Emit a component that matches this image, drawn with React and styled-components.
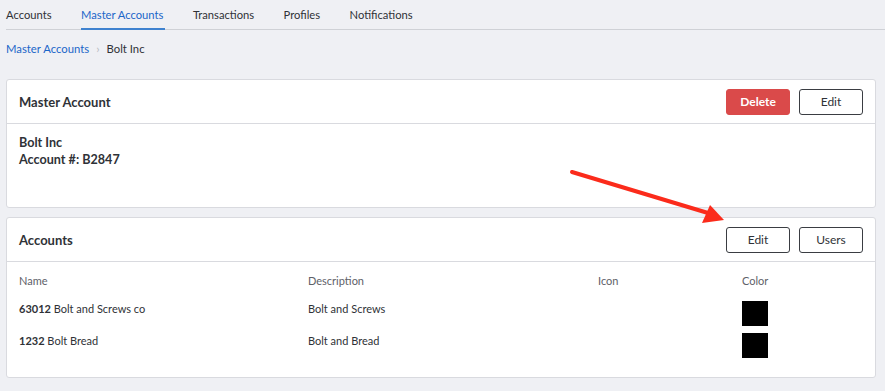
import styled, { createGlobalStyle } from 'styled-components';

const GlobalStyle = createGlobalStyle`
  html, body {
    margin: 0;
    padding: 0;
    background: #eff0f4;
    font-family: Lato, "Open Sans", sans-serif;
    color: #2f3237;
  }
`

const tabs = ['Accounts', 'Master Accounts', 'Transactions', 'Profiles', 'Notifications'];

const accounts = [
  { num: '63012', name: 'Bolt and Screws co', description: 'Bolt and Screws', color: '#000' },
  { num: '1232', name: 'Bolt Bread', description: 'Bolt and Bread', color: '#000' },
];

export default function App() {
  return (
    <>
      <GlobalStyle />
      <Page>
        <TabBar>
          {tabs.map(t => (
            <Tab key={t} $active={t === 'Master Accounts'}>{t}</Tab>
          ))}
        </TabBar>
        <Breadcrumb>
          <Crumb href="#">Master Accounts</Crumb>
          <Sep>›</Sep>
          <span>Bolt Inc</span>
        </Breadcrumb>

        <Card>
          <CardHeader>
            <Title>Master Account</Title>
            <Actions>
              <Button $danger>Delete</Button>
              <Button>Edit</Button>
            </Actions>
          </CardHeader>
          <InfoBody>
            <div>Bolt Inc</div>
            <div>Account #: B2847</div>
          </InfoBody>
        </Card>

        <Card>
          <CardHeader>
            <Title>Accounts</Title>
            <Actions>
              <Button>Edit</Button>
              <Button>Users</Button>
            </Actions>
          </CardHeader>
          <TableBody>
            <HeadRow>
              <span>Name</span>
              <span>Description</span>
              <span>Icon</span>
              <span>Color</span>
            </HeadRow>
            {accounts.map(a => (
              <Row key={a.num}>
                <span><b>{a.num}</b> {a.name}</span>
                <span>{a.description}</span>
                <span></span>
                <span><Swatch $color={a.color} /></span>
              </Row>
            ))}
          </TableBody>
        </Card>

        <Arrow width="170" height="70" viewBox="0 0 170 70">
          <line x1="4" y1="4" x2="140" y2="45" stroke="#fb2b1b" strokeWidth="4" strokeLinecap="round" />
          <polygon points="156,52 134,55 142,37" fill="#fb2b1b" />
        </Arrow>
      </Page>
    </>
  )
}

const Page = styled.div`
  position: relative;
  padding: 0 9px 0 6px;
`
const TabBar = styled.nav`
  display: flex;
  gap: 29.5px;
  height: 29px;
  border-bottom: 1px solid #cfd1d6;
  margin-right: -9px;
`
const Tab = styled.a`
  display: flex;
  align-items: center;
  font-size: 11.2px;
  color: ${p => p.$active ? '#1b66c9' : '#2f3237'};
  border-bottom: 2px solid ${p => p.$active ? '#3f82cf' : 'transparent'};
  margin-bottom: -1px;
  padding: 0 2px 0 0;
  margin-right: -2px;
`
const Breadcrumb = styled.div`
  display: flex;
  align-items: center;
  height: 36px;
  font-size: 11.3px;
  margin-bottom: 13px;
`
const Crumb = styled.a`
  color: #1b66c9;
  text-decoration: none;
`
const Sep = styled.span`
  color: #b8bbc2;
  margin: 0 7px 0 7px;
  font-size: 12px;
`
const Card = styled.section`
  background: #fff;
  border: 1px solid #d9dadf;
  border-radius: 3px;
  margin-bottom: 9px;
`
const CardHeader = styled.header`
  display: flex;
  align-items: center;
  justify-content: space-between;
  height: 43px;
  padding: 0 12px 0 12px;
  border-bottom: 1px solid #d9dadf;
`
const Title = styled.h2`
  margin: 0;
  font-size: 13px;
  font-weight: 700;
  color: #2f3237;
`
const Actions = styled.div`
  display: flex;
  gap: 9px;
`
const Button = styled.button`
  width: 64px;
  height: 26px;
  border-radius: 3px;
  font-family: Lato, sans-serif;
  font-size: 12px;
  cursor: pointer;
  background: ${p => p.$danger ? '#da4a4a' : '#fff'};
  color: ${p => p.$danger ? '#fff' : '#2f3237'};
  border: 1px solid ${p => p.$danger ? '#da4a4a' : '#3a3d42'};
  font-weight: ${p => p.$danger ? 700 : 400};
`
const InfoBody = styled.div`
  height: 83px;
  box-sizing: border-box;
  padding: 10px 12px;
  font-size: 12.6px;
  font-weight: 700;
  line-height: 17px;
`
const TableBody = styled.div`
  padding: 11px 12px 19px;
  font-size: 11px;
`
const HeadRow = styled.div`
  display: grid;
  grid-template-columns: 289px 290px 144px 1fr;
  line-height: 16px;
  color: #5e6168;
  margin-bottom: 12px;
`
const Row = styled.div`
  display: grid;
  grid-template-columns: 289px 290px 144px 1fr;
  line-height: 15px;
  color: #2f3237;
  & + & {
    margin-top: 7px;
  }
  b {
    font-weight: 700;
  }
`
const Swatch = styled.div`
  width: 26px;
  height: 25px;
  background: ${p => p.$color};
`
const Arrow = styled.svg`
  position: absolute;
  left: 568px;
  top: 168px;
  pointer-events: none;
`
